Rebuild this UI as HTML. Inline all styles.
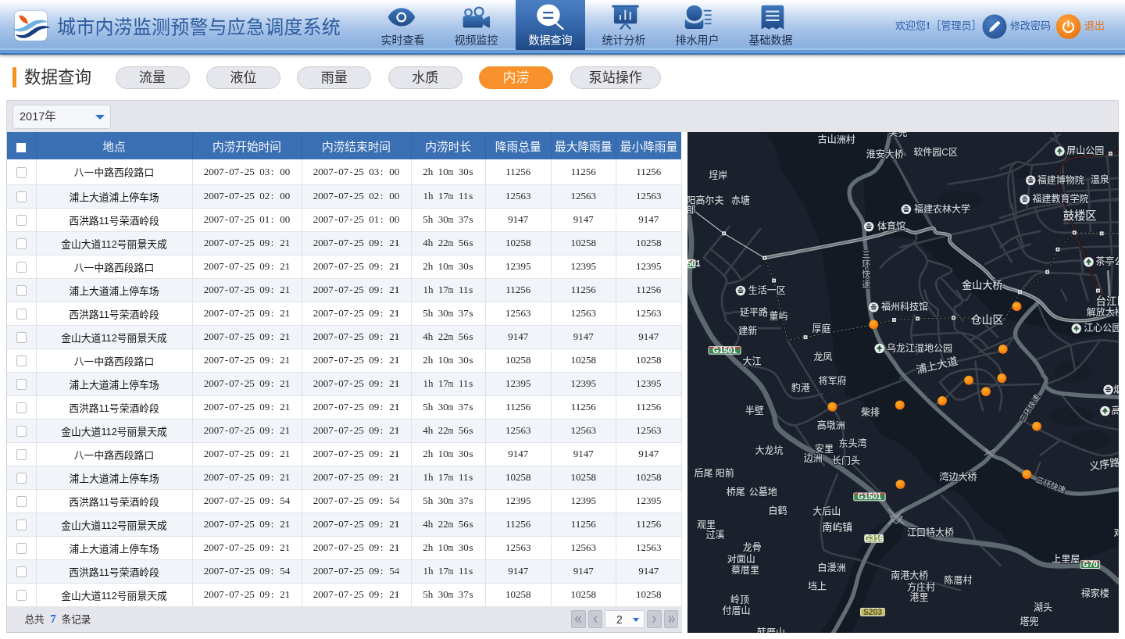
<!DOCTYPE html>
<html lang="zh-CN">
<head>
<meta charset="utf-8">
<title>城市内涝监测预警与应急调度系统</title>
<style>
*{box-sizing:border-box;margin:0;padding:0}
html,body{width:1125px;height:639px;overflow:hidden;background:#fff}
body{font-family:"Liberation Sans","Noto Sans CJK SC",sans-serif;color:#333}
#app{position:absolute;left:0;top:0;width:1440px;height:818px;transform:scale(0.78125);transform-origin:0 0;background:#fff;overflow:hidden;will-change:transform}
/* header */
#hd{position:absolute;left:0;top:0;width:1440px;height:69.6px;background:linear-gradient(#fff 0,#f3f7fc 5px,#d6e3f5 15px,#bdd2ee 26px,#a6c2e8 38px,#93b5e2 52px,#8ab0df 61.2px,#a0c2eb 62.4px,#a0c2eb 63.6px,#6692c8 64px,#6692c8 65px,#6aa7e6 65.6px,#5d9de1 67.4px,#4878b0 68px,#4675ab 69.6px);box-shadow:0 1px 4px rgba(40,45,70,.55)}
#hsv{position:absolute;left:0;top:0}
#logo{position:absolute;left:19px;top:13.5px;width:41px;height:38px;background:#fff;border-radius:6px;box-shadow:0 0 2px rgba(80,110,160,.6)}
#title{position:absolute;left:73px;top:15px;font-size:24px;line-height:40px;color:#2d5c9e;letter-spacing:0.2px;white-space:nowrap}
.nav{position:absolute;top:0;height:64px;width:89px;text-align:center;font-size:14px;color:#1d2f4a;white-space:nowrap}
.nav span{position:absolute;left:0;right:0;top:41px;line-height:20px}
.nav svg{position:absolute;left:50%;top:6px;margin-left:-20px;width:40px;height:34px}
.nav.on{background:linear-gradient(#4a80c3,#3567ab 50%,#1f4985);color:#fff}
.ut{position:absolute;top:24px;font-size:13px;line-height:18px;color:#2e62b0;white-space:nowrap;font-family:"Liberation Sans","Noto Sans CJK SC",sans-serif}
.rb{position:absolute;top:17px;width:30px;height:30px;border-radius:50%}
/* section */
#bar{position:absolute;left:16px;top:86px;width:5px;height:26px;background:#f5921e;border-radius:1px}
#sec{position:absolute;left:31px;top:81.5px;font-size:21.5px;line-height:34px;color:#333;white-space:nowrap}
.pill{position:absolute;top:84.5px;width:95px;height:29px;border-radius:15px;background:#e6e7ec;border:1px solid #c9cad1;font-size:17px;line-height:27px;text-align:center;color:#333}
.pill.on{background:#f8912b;border-color:#f08a1e;color:#fff1dd}
#tb{position:absolute;left:8px;top:128px;width:1424px;height:41px;background:#e5e6ec;border:1px solid #d3d5da;border-bottom:0}
#lb{position:absolute;left:8px;top:169px;width:1px;height:641px;background:#cfd0d4}
#sel{position:absolute;left:15.5px;top:133.5px;width:126px;height:31px;background:#f5f6f9;border:1px solid #cfd1d7;border-radius:4px;font-size:14.5px;line-height:29px;padding-left:8.5px;color:#333}
#sel i{position:absolute;right:6.5px;top:12px;border:6px solid transparent;border-top:6px solid #2f6fc6;border-bottom:0}
/* table */
#tw{position:absolute;left:9px;top:169px;width:871px;height:641px;background:#fff}
table{border-collapse:collapse;table-layout:fixed;width:863px;font-family:"Liberation Serif","Noto Serif CJK SC",serif;font-size:13px;color:#222}
td i{display:inline-block;width:6.5px;text-align:center;font-style:normal;white-space:pre}
td i.m{width:10.2px;margin:0 -1.85px;transform:scaleX(.66)}
th{height:35px;background:#3a6fb3;color:#f4f8ff;font-weight:normal;font-family:"Liberation Sans","Noto Sans CJK SC",sans-serif;font-size:14.7px;letter-spacing:0;border-right:1px solid #3463a4;text-align:center;padding-bottom:1px}
th:last-child{border-right:0}
tr.first td{height:32px}
td{height:30px;text-align:center;border-right:1px solid #dfe2e8;border-bottom:1px solid #dfe2e8;white-space:nowrap}
td.zh{font-family:"Liberation Sans","Noto Sans CJK SC",sans-serif;font-size:12.8px;color:#111}
tr.alt td{background:#f1f4f9}
.cb{display:inline-block;width:13.5px;height:13.5px;border:1px solid #bdbdbd;border-radius:2px;background:#fff;vertical-align:middle}
th .cb{border:0;border-radius:0;width:12px;height:12px;position:relative;top:1.5px}
#ft{position:absolute;left:9px;top:776px;width:863.5px;height:34px;background:#e5e6ec;border-bottom:1px solid #c6c7cb;font-family:"Liberation Sans","Noto Sans CJK SC",sans-serif;font-size:12.6px;line-height:33px;padding-left:22.5px;color:#2a2a2a;white-space:pre}
#ft b{color:#1a62e0;font-family:"Liberation Serif",serif;font-weight:bold;font-size:15px;margin:0 3.5px 0 4px}
.pg{position:absolute;top:780.5px;height:23.5px;width:18.6px;background:#c8cbd4;border:1px solid #b6b9c4;border-radius:2px}
.pg svg{position:absolute;left:0;top:0;width:100%;height:100%}
#pgs{position:absolute;left:774px;top:780.5px;width:51px;height:23.5px;background:#fbfbfd;border:1px solid #cdd0d8;border-radius:2px;font-size:14px;line-height:22px;padding-left:14px;color:#333}
#pgs i{position:absolute;right:6.5px;top:9px;border:4px solid transparent;border-top:5px solid #2f6fd0;border-bottom:0}
#map{position:absolute;left:879.6px;top:168.7px;width:552px;height:641px;overflow:hidden;background:#1b2029}
</style>
</head>
<body>
<div id="app">
<div id="hd">
  <div id="logo"></div>
  <div id="title">城市内涝监测预警与应急调度系统</div>
  <div class="nav" style="left:471px"><span>实时查看</span></div>
  <div class="nav" style="left:565px"><span>视频监控</span></div>
  <div class="nav on" style="left:660px"><span>数据查询</span></div>
  <div class="nav" style="left:754px"><span>统计分析</span></div>
  <div class="nav" style="left:848px"><span>排水用户</span></div>
  <div class="nav" style="left:942px"><span>基础数据</span></div>
  <div class="ut" style="left:1146px">欢迎您<b style="display:inline-block;width:6.5px;text-align:center">!</b>［管理员］</div>
  <div class="ut" style="left:1293px">修改密码</div>
  <div class="ut" style="left:1388px;color:#e8741a">退出</div>
<svg id="hsv" viewBox="0 0 1125 53.125" width="1440" height="68">
<defs>
<linearGradient id="ig" x1="0" y1="0" x2="0" y2="1"><stop offset="0" stop-color="#3d77bb"/><stop offset="1" stop-color="#1f4b88"/></linearGradient>
<radialGradient id="bg1" cx="0.4" cy="0.3" r="0.8"><stop offset="0" stop-color="#4a7fc6"/><stop offset="1" stop-color="#234f90"/></radialGradient>
<radialGradient id="og1" cx="0.4" cy="0.3" r="0.8"><stop offset="0" stop-color="#ffa338"/><stop offset="1" stop-color="#e8720f"/></radialGradient>
</defs>
<!-- logo -->
<path d="M19.3 15.2 C23.6 15.2 27.8 19 28 23.7 C23.6 23.3 19.4 19.6 19.3 15.2Z" fill="#e8591a"/>
<path d="M11.7 28.6 C17 29.6 21.5 28.8 26 25.6 C31 22 36 19.4 41.5 19.9 C44 20.1 46.5 21 48 21.8 C45 22.3 41 22.3 37 24.2 C32 26.8 28 30.8 22 31.5 C18 31.9 14 30.6 11.7 28.6Z" fill="#6db1e2"/>
<path d="M15.5 34.4 C20 36 25 35.4 29.5 32 C34 28.6 38 26 43 25.8 C46 25.7 48.5 26.8 50.3 28 C47 28 43 28.2 39.5 30 C35 32.5 31 37 25 38 C21 38.6 17.5 37 15.5 34.4Z" fill="#173f80"/>
<!-- eye -->
<g fill="url(#ig)">
<path d="M388 17.2 C390.3 11.6 396 8 401.5 8 C407 8 412.7 11.6 415 17.2 C412.7 22.7 407 26.2 401.5 26.2 C396 26.2 390.3 22.7 388 17.2Z"/>
<!-- camera -->
<rect x="463" y="16" width="19.8" height="11.8" rx="2"/>
<path d="M482.6 19.6 L488.6 16.3 Q489.9 15.8 489.9 17 V26.8 Q489.9 28 488.6 27.5 L482.6 24.2Z"/>
<!-- board -->
<rect x="612" y="5" width="26.9" height="2.4" rx="0.5"/>
<path d="M614 7 H637 V21.6 Q637 23.6 635 23.6 H616 Q614 23.6 614 21.6Z"/>
<path d="M624.3 23 L619.6 29 L621.4 29.4 L625.4 24.6 L629.4 29.4 L631.2 29 L626.5 23Z"/>
<!-- user -->
<circle cx="694.3" cy="13.1" r="7.9"/>
<path d="M685 19.2 Q689 23.3 694.3 23.3 Q699.6 23.3 703.4 19.2 V25.9 Q703.4 28.9 700.4 28.9 H688 Q685 28.9 685 25.9Z"/>
<rect x="703.6" y="10" width="7.8" height="1.3"/><rect x="704.6" y="14.3" width="6.8" height="1.3"/><rect x="704.6" y="18.7" width="6.8" height="1.3"/><rect x="704.6" y="23" width="6.8" height="1.3"/>
<!-- receipt -->
<path d="M761.4 7.2 Q761.4 5.2 763.4 5.2 H781.8 Q783.8 5.2 783.8 7.2 V29.2 L780.1 27.2 L776.3 29.2 L772.6 27.2 L768.9 29.2 L765.1 27.2 L761.4 29.2Z"/>
</g>
<circle cx="401.4" cy="17.2" r="4.1" fill="none" stroke="#eef3fa" stroke-width="2"/>
<circle cx="468.4" cy="12.6" r="3.3" fill="none" stroke="#3a72b5" stroke-width="1.8"/>
<circle cx="479" cy="11.7" r="4.25" fill="none" stroke="#3a72b5" stroke-width="1.8"/>
<g fill="#dbe6f5"><rect x="619.6" y="14.9" width="1.5" height="5"/><rect x="624.5" y="10" width="1.5" height="9.9"/><rect x="629.5" y="11.8" width="1.5" height="8.1"/>
<rect x="765.8" y="10.6" width="13.4" height="1.8"/><rect x="765.8" y="14.9" width="13.4" height="1.8"/><rect x="765.8" y="19.3" width="13.4" height="1.8"/></g>
<path d="M685.6 17.4 Q689 22.4 694.3 22.4 Q699.6 22.4 703 17.4" fill="none" stroke="#c3d6f0" stroke-width="1.5"/>
<!-- magnifier -->
<ellipse cx="548.4" cy="15.1" rx="11.5" ry="10.8" fill="#fff"/>
<path d="M556 23 L563 29" stroke="#fff" stroke-width="1.8" stroke-linecap="round"/>
<rect x="543" y="11.8" width="10.4" height="1.7" rx=".6" fill="#2f5f9f"/><rect x="543" y="16.9" width="10.4" height="1.8" rx=".6" fill="#2f5f9f"/>
<!-- right buttons -->
<circle cx="994.5" cy="26.6" r="12.1" fill="url(#bg1)"/>
<path d="M989.2 32 L990.2 28.4 L997.2 21.4 Q998 20.7 998.9 21.5 L999.7 22.3 Q1000.4 23.1 999.7 23.9 L992.7 30.9Z" fill="#fff"/>
<circle cx="1068.4" cy="26.6" r="12.3" fill="url(#og1)"/>
<path d="M1065.4 23 A5.1 5.1 0 1 0 1071.4 23" fill="none" stroke="#fff" stroke-width="1.7" stroke-linecap="round"/>
<path d="M1068.4 21 V26.4" stroke="#fff" stroke-width="1.7" stroke-linecap="round"/>
</svg>

</div>
<div id="bar"></div>
<div id="sec">数据查询</div>
<div class="pill" style="left:147.5px">流量</div>
<div class="pill" style="left:263.9px">液位</div>
<div class="pill" style="left:380.3px">雨量</div>
<div class="pill" style="left:496.7px">水质</div>
<div class="pill on" style="left:613.1px">内涝</div>
<div class="pill" style="left:729.5px;width:116.5px">泵站操作</div>
<div id="tb"></div>
<div id="sel">2017年<i></i></div>
<div id="tw">
<table>
<colgroup><col style="width:37px"><col style="width:200px"><col style="width:140px"><col style="width:140px"><col style="width:95.5px"><col style="width:83.5px"><col style="width:83.5px"><col style="width:83.5px"></colgroup>
<tr><th><span class="cb"></span></th><th>地点</th><th>内涝开始时间</th><th>内涝结束时间</th><th>内涝时长</th><th>降雨总量</th><th>最大降雨量</th><th>最小降雨量</th></tr>
<tr class="first"><td><span class="cb"></span></td><td class="zh">八一中路西段路口</td><td>2007<i>-</i>07<i>-</i>25<i> </i>03<i>:</i><i> </i>00</td><td>2007<i>-</i>07<i>-</i>25<i> </i>03<i>:</i><i> </i>00</td><td>2<i>h</i><i> </i>10<i class="m">m</i><i> </i>30<i>s</i></td><td>11256</td><td>11256</td><td>11256</td></tr>
<tr class="alt"><td><span class="cb"></span></td><td class="zh">浦上大道浦上停车场</td><td>2007<i>-</i>07<i>-</i>25<i> </i>02<i>:</i><i> </i>00</td><td>2007<i>-</i>07<i>-</i>25<i> </i>02<i>:</i><i> </i>00</td><td>1<i>h</i><i> </i>17<i class="m">m</i><i> </i>11<i>s</i></td><td>12563</td><td>12563</td><td>12563</td></tr>
<tr><td><span class="cb"></span></td><td class="zh">西洪路11号荣酒岭段</td><td>2007<i>-</i>07<i>-</i>25<i> </i>01<i>:</i><i> </i>00</td><td>2007<i>-</i>07<i>-</i>25<i> </i>01<i>:</i><i> </i>00</td><td>5<i>h</i><i> </i>30<i class="m">m</i><i> </i>37<i>s</i></td><td>9147</td><td>9147</td><td>9147</td></tr>
<tr class="alt"><td><span class="cb"></span></td><td class="zh">金山大道112号丽景天成</td><td>2007<i>-</i>07<i>-</i>25<i> </i>09<i>:</i><i> </i>21</td><td>2007<i>-</i>07<i>-</i>25<i> </i>09<i>:</i><i> </i>21</td><td>4<i>h</i><i> </i>22<i class="m">m</i><i> </i>56<i>s</i></td><td>10258</td><td>10258</td><td>10258</td></tr>
<tr><td><span class="cb"></span></td><td class="zh">八一中路西段路口</td><td>2007<i>-</i>07<i>-</i>25<i> </i>09<i>:</i><i> </i>21</td><td>2007<i>-</i>07<i>-</i>25<i> </i>09<i>:</i><i> </i>21</td><td>2<i>h</i><i> </i>10<i class="m">m</i><i> </i>30<i>s</i></td><td>12395</td><td>12395</td><td>12395</td></tr>
<tr class="alt"><td><span class="cb"></span></td><td class="zh">浦上大道浦上停车场</td><td>2007<i>-</i>07<i>-</i>25<i> </i>09<i>:</i><i> </i>21</td><td>2007<i>-</i>07<i>-</i>25<i> </i>09<i>:</i><i> </i>21</td><td>1<i>h</i><i> </i>17<i class="m">m</i><i> </i>11<i>s</i></td><td>11256</td><td>11256</td><td>11256</td></tr>
<tr><td><span class="cb"></span></td><td class="zh">西洪路11号荣酒岭段</td><td>2007<i>-</i>07<i>-</i>25<i> </i>09<i>:</i><i> </i>21</td><td>2007<i>-</i>07<i>-</i>25<i> </i>09<i>:</i><i> </i>21</td><td>5<i>h</i><i> </i>30<i class="m">m</i><i> </i>37<i>s</i></td><td>12563</td><td>12563</td><td>12563</td></tr>
<tr class="alt"><td><span class="cb"></span></td><td class="zh">金山大道112号丽景天成</td><td>2007<i>-</i>07<i>-</i>25<i> </i>09<i>:</i><i> </i>21</td><td>2007<i>-</i>07<i>-</i>25<i> </i>09<i>:</i><i> </i>21</td><td>4<i>h</i><i> </i>22<i class="m">m</i><i> </i>56<i>s</i></td><td>9147</td><td>9147</td><td>9147</td></tr>
<tr><td><span class="cb"></span></td><td class="zh">八一中路西段路口</td><td>2007<i>-</i>07<i>-</i>25<i> </i>09<i>:</i><i> </i>21</td><td>2007<i>-</i>07<i>-</i>25<i> </i>09<i>:</i><i> </i>21</td><td>2<i>h</i><i> </i>10<i class="m">m</i><i> </i>30<i>s</i></td><td>10258</td><td>10258</td><td>10258</td></tr>
<tr class="alt"><td><span class="cb"></span></td><td class="zh">浦上大道浦上停车场</td><td>2007<i>-</i>07<i>-</i>25<i> </i>09<i>:</i><i> </i>21</td><td>2007<i>-</i>07<i>-</i>25<i> </i>09<i>:</i><i> </i>21</td><td>1<i>h</i><i> </i>17<i class="m">m</i><i> </i>11<i>s</i></td><td>12395</td><td>12395</td><td>12395</td></tr>
<tr><td><span class="cb"></span></td><td class="zh">西洪路11号荣酒岭段</td><td>2007<i>-</i>07<i>-</i>25<i> </i>09<i>:</i><i> </i>21</td><td>2007<i>-</i>07<i>-</i>25<i> </i>09<i>:</i><i> </i>21</td><td>5<i>h</i><i> </i>30<i class="m">m</i><i> </i>37<i>s</i></td><td>11256</td><td>11256</td><td>11256</td></tr>
<tr class="alt"><td><span class="cb"></span></td><td class="zh">金山大道112号丽景天成</td><td>2007<i>-</i>07<i>-</i>25<i> </i>09<i>:</i><i> </i>21</td><td>2007<i>-</i>07<i>-</i>25<i> </i>09<i>:</i><i> </i>21</td><td>4<i>h</i><i> </i>22<i class="m">m</i><i> </i>56<i>s</i></td><td>12563</td><td>12563</td><td>12563</td></tr>
<tr><td><span class="cb"></span></td><td class="zh">八一中路西段路口</td><td>2007<i>-</i>07<i>-</i>25<i> </i>09<i>:</i><i> </i>21</td><td>2007<i>-</i>07<i>-</i>25<i> </i>09<i>:</i><i> </i>21</td><td>2<i>h</i><i> </i>10<i class="m">m</i><i> </i>30<i>s</i></td><td>9147</td><td>9147</td><td>9147</td></tr>
<tr class="alt"><td><span class="cb"></span></td><td class="zh">浦上大道浦上停车场</td><td>2007<i>-</i>07<i>-</i>25<i> </i>09<i>:</i><i> </i>21</td><td>2007<i>-</i>07<i>-</i>25<i> </i>09<i>:</i><i> </i>21</td><td>1<i>h</i><i> </i>17<i class="m">m</i><i> </i>11<i>s</i></td><td>10258</td><td>10258</td><td>10258</td></tr>
<tr><td><span class="cb"></span></td><td class="zh">西洪路11号荣酒岭段</td><td>2007<i>-</i>07<i>-</i>25<i> </i>09<i>:</i><i> </i>54</td><td>2007<i>-</i>07<i>-</i>25<i> </i>09<i>:</i><i> </i>54</td><td>5<i>h</i><i> </i>30<i class="m">m</i><i> </i>37<i>s</i></td><td>12395</td><td>12395</td><td>12395</td></tr>
<tr class="alt"><td><span class="cb"></span></td><td class="zh">金山大道112号丽景天成</td><td>2007<i>-</i>07<i>-</i>25<i> </i>09<i>:</i><i> </i>21</td><td>2007<i>-</i>07<i>-</i>25<i> </i>09<i>:</i><i> </i>21</td><td>4<i>h</i><i> </i>22<i class="m">m</i><i> </i>56<i>s</i></td><td>11256</td><td>11256</td><td>11256</td></tr>
<tr><td><span class="cb"></span></td><td class="zh">浦上大道浦上停车场</td><td>2007<i>-</i>07<i>-</i>25<i> </i>09<i>:</i><i> </i>21</td><td>2007<i>-</i>07<i>-</i>25<i> </i>09<i>:</i><i> </i>21</td><td>2<i>h</i><i> </i>10<i class="m">m</i><i> </i>30<i>s</i></td><td>12563</td><td>12563</td><td>12563</td></tr>
<tr class="alt"><td><span class="cb"></span></td><td class="zh">西洪路11号荣酒岭段</td><td>2007<i>-</i>07<i>-</i>25<i> </i>09<i>:</i><i> </i>54</td><td>2007<i>-</i>07<i>-</i>25<i> </i>09<i>:</i><i> </i>54</td><td>1<i>h</i><i> </i>17<i class="m">m</i><i> </i>11<i>s</i></td><td>9147</td><td>9147</td><td>9147</td></tr>
<tr><td><span class="cb"></span></td><td class="zh">金山大道112号丽景天成</td><td>2007<i>-</i>07<i>-</i>25<i> </i>09<i>:</i><i> </i>21</td><td>2007<i>-</i>07<i>-</i>25<i> </i>09<i>:</i><i> </i>21</td><td>5<i>h</i><i> </i>30<i class="m">m</i><i> </i>37<i>s</i></td><td>10258</td><td>10258</td><td>10258</td></tr>
</table>
</div>
<div id="lb"></div>
<div id="ft">总共 <b>7</b> 条记录</div>
<div class="pg" style="left:731px"><svg viewBox="0 0 18.6 23.5"><path d="M8.6 7.5 L5 11.7 L8.6 16 M13 7.5 L9.4 11.7 L13 16" fill="none" stroke="#7d8292" stroke-width="1.2"/></svg></div>
<div class="pg" style="left:752.7px"><svg viewBox="0 0 18.6 23.5"><path d="M11 7.5 L7.4 11.7 L11 16" fill="none" stroke="#7d8292" stroke-width="1.2"/></svg></div>
<div id="pgs">2<i></i></div>
<div class="pg" style="left:828.4px"><svg viewBox="0 0 18.6 23.5"><path d="M7.6 7.5 L11.2 11.7 L7.6 16" fill="none" stroke="#7d8292" stroke-width="1.2"/></svg></div>
<div class="pg" style="left:849.8px"><svg viewBox="0 0 18.6 23.5"><path d="M5.6 7.5 L9.2 11.7 L5.6 16 M10 7.5 L13.6 11.7 L10 16" fill="none" stroke="#7d8292" stroke-width="1.2"/></svg></div>
<div id="map">
<svg width="552" height="641" viewBox="687.2 131.8 431.3 500.8" preserveAspectRatio="none" style="display:block;font-family:'Liberation Sans','Noto Sans CJK SC',sans-serif">
<defs>
<radialGradient id="od" cx="0.42" cy="0.35" r="0.75"><stop offset="0" stop-color="#ffb02e"/><stop offset="0.55" stop-color="#fb8a10"/><stop offset="1" stop-color="#dc5c06"/></radialGradient>
</defs>
<rect x="687.2" y="131.8" width="431.3" height="500.8" fill="#1b212c"/>
<polygon points="765.0,131.0 890.0,131.0 887.0,146.0 882.8,158.5 872.0,172.5 858.0,179.0 851.0,185.0 849.0,192.0 851.0,202.0 858.0,213.0 863.0,223.0 864.5,240.0 866.0,255.0 868.0,295.0 871.0,316.0 879.0,340.0 895.0,364.0 905.0,377.0 940.0,412.0 988.0,452.0 1004.0,460.0 1027.0,474.0 1070.0,493.0 1120.0,489.0 1120.0,545.0 1080.0,560.0 1045.0,562.0 1010.0,546.0 1000.0,531.4 986.4,522.6 973.3,509.5 960.1,494.2 942.6,487.6 925.1,472.3 916.3,456.9 896.6,441.6 881.3,435.0 870.4,417.5 863.8,402.0 846.0,395.0 834.0,361.0 828.7,295.0 825.1,279.0 822.4,255.0 817.1,236.4 806.5,209.8 793.2,188.5 782.6,172.6 774.6,146.0" fill="#131a24"/>
<polygon points="862.0,150.0 890.0,140.0 903.0,175.0 912.0,190.0 925.0,211.0 932.0,228.0 936.0,232.0 949.0,235.0 952.0,244.0 982.0,268.0 993.0,279.0 1005.0,287.0 1020.0,292.0 1038.0,300.0 1054.0,314.0 1073.0,318.0 1094.0,316.0 1120.0,308.0 1120.0,332.0 1075.0,338.0 1040.0,326.0 1000.0,318.0 992.6,312.6 977.6,297.6 955.1,275.1 930.7,254.4 915.7,239.4 890.0,236.0 866.0,240.0" fill="#131a24"/>
<polygon points="893.0,516.0 905.0,523.0 900.0,540.0 880.0,560.0 868.0,590.0 858.0,620.0 850.0,633.0 820.0,633.0 836.0,610.0 848.0,580.0 858.0,550.0 872.0,530.0" fill="#131a24"/>
<ellipse cx="1072.6" cy="371.7" rx="19" ry="11" fill="#171d27"/>
<ellipse cx="1071.2" cy="415.5" rx="22" ry="10" fill="#171d27"/>
<ellipse cx="1021.5" cy="169" rx="12" ry="9" fill="#171d27"/>
<ellipse cx="959" cy="200" rx="22" ry="9" fill="#171d27"/>
<ellipse cx="1090" cy="440" rx="20" ry="10" fill="#171d27"/>
<path d="M787.0 340.0 C793.5 350.6 814.9 386.9 823.0 399.0 C831.1 411.1 828.6 401.8 832.0 407.0 C835.4 412.2 839.7 417.6 842.0 428.0 C844.3 438.4 844.5 458.3 845.0 465.0" fill="none" stroke="#38414a" stroke-width="2.0" stroke-linejoin="round" stroke-linecap="round" />
<polyline points="832.0,407.0 905.0,379.0" fill="none" stroke="#38414a" stroke-width="2.0" stroke-linejoin="round" stroke-linecap="round" />
<path d="M832.0 407.0 C825.3 410.2 805.6 424.1 795.0 425.0 C784.4 425.9 777.0 414.3 773.0 412.0" fill="none" stroke="#38414a" stroke-width="2.0" stroke-linejoin="round" stroke-linecap="round" />
<path d="M795.0 425.0 C797.7 429.0 804.8 439.8 810.0 447.0 C815.2 454.2 821.5 461.8 824.0 465.0" fill="none" stroke="#38414a" stroke-width="2.0" stroke-linejoin="round" stroke-linecap="round" />
<path d="M746.0 365.0 C750.9 366.3 764.9 366.2 773.0 372.0 C781.1 377.8 782.2 393.0 791.0 397.0 C799.8 401.0 816.4 394.5 822.0 394.0" fill="none" stroke="#38414a" stroke-width="2.0" stroke-linejoin="round" stroke-linecap="round" />
<path d="M900.0 247.0 C909.5 244.7 937.2 237.8 953.0 234.0 C968.8 230.2 973.6 230.0 988.0 226.0 C1002.4 222.0 1015.4 216.3 1033.0 212.0 C1050.6 207.7 1070.3 204.5 1086.0 202.0 C1101.7 199.5 1113.9 198.7 1120.0 198.0" fill="none" stroke="#38414a" stroke-width="2.0" stroke-linejoin="round" stroke-linecap="round" />
<path d="M948.0 184.0 C959.5 181.7 993.8 178.6 1012.0 171.0 C1030.2 163.4 1040.4 148.7 1049.0 142.0 C1057.6 135.3 1058.0 135.4 1060.0 134.0" fill="none" stroke="#38414a" stroke-width="2.0" stroke-linejoin="round" stroke-linecap="round" />
<polyline points="1012.0,171.0 1016.0,215.0" fill="none" stroke="#38414a" stroke-width="2.0" stroke-linejoin="round" stroke-linecap="round" />
<path d="M900.0 170.0 C902.9 175.2 910.8 189.5 916.0 199.0 C921.2 208.5 926.7 218.7 929.0 223.0" fill="none" stroke="#38414a" stroke-width="2.0" stroke-linejoin="round" stroke-linecap="round" />
<path d="M892.0 158.5 C894.0 161.5 900.0 170.3 903.2 175.4 C906.4 180.5 908.8 184.6 910.0 186.6" fill="none" stroke="#38414a" stroke-width="2.0" stroke-linejoin="round" stroke-linecap="round" />
<path d="M1033.0 361.0 C1039.7 358.1 1057.9 348.8 1070.0 345.0 C1082.1 341.2 1091.0 340.5 1100.0 340.0 C1109.0 339.5 1116.4 341.6 1120.0 342.0" fill="none" stroke="#38414a" stroke-width="2.0" stroke-linejoin="round" stroke-linecap="round" />
<path d="M1044.0 385.0 C1049.6 382.3 1064.9 378.1 1075.0 370.0 C1085.1 361.9 1095.5 345.4 1100.0 340.0" fill="none" stroke="#38414a" stroke-width="2.0" stroke-linejoin="round" stroke-linecap="round" />
<path d="M1060.0 393.0 C1064.5 397.9 1074.2 413.3 1085.0 420.0 C1095.8 426.7 1113.7 428.2 1120.0 430.0" fill="none" stroke="#38414a" stroke-width="2.0" stroke-linejoin="round" stroke-linecap="round" />
<path d="M1022.0 420.0 C1028.8 423.6 1046.0 433.7 1060.0 440.0 C1074.0 446.3 1089.2 452.8 1100.0 455.0 C1110.8 457.2 1116.4 452.5 1120.0 452.0" fill="none" stroke="#38414a" stroke-width="2.0" stroke-linejoin="round" stroke-linecap="round" />
<polyline points="1070.0,345.0 1075.0,370.0" fill="none" stroke="#38414a" stroke-width="2.0" stroke-linejoin="round" stroke-linecap="round" />
<polyline points="1040.0,455.0 1060.0,440.0" fill="none" stroke="#38414a" stroke-width="2.0" stroke-linejoin="round" stroke-linecap="round" />
<path d="M1036.0 300.0 C1038.5 305.4 1043.9 321.9 1050.0 330.0 C1056.1 338.1 1066.4 342.3 1070.0 345.0" fill="none" stroke="#38414a" stroke-width="2.0" stroke-linejoin="round" stroke-linecap="round" />
<path d="M837.0 474.0 C834.3 481.4 824.7 502.8 822.0 515.0 C819.3 527.2 820.9 535.3 822.0 542.0 C823.1 548.7 820.6 548.6 828.0 552.0 C835.4 555.4 849.1 556.9 863.0 561.0 C876.9 565.1 897.4 572.5 905.0 575.0" fill="none" stroke="#38414a" stroke-width="2.0" stroke-linejoin="round" stroke-linecap="round" />
<polyline points="905.0,575.0 960.0,590.0" fill="none" stroke="#38414a" stroke-width="2.0" stroke-linejoin="round" stroke-linecap="round" />
<path d="M941.0 495.0 C945.3 499.5 958.9 511.9 965.0 520.0 C971.1 528.1 973.2 536.4 975.0 540.0" fill="none" stroke="#38414a" stroke-width="2.0" stroke-linejoin="round" stroke-linecap="round" />
<polyline points="975.0,540.0 1000.0,565.0" fill="none" stroke="#38414a" stroke-width="2.0" stroke-linejoin="round" stroke-linecap="round" />
<polyline points="850.0,462.0 880.0,492.0" fill="none" stroke="#38414a" stroke-width="2.0" stroke-linejoin="round" stroke-linecap="round" />
<polyline points="1040.0,462.0 1035.0,475.0" fill="none" stroke="#38414a" stroke-width="2.0" stroke-linejoin="round" stroke-linecap="round" />
<path d="M911.3 335.1 C916.0 334.8 928.1 333.9 937.5 333.6 C947.0 333.2 956.4 332.2 963.8 333.2 C971.3 334.1 974.5 336.1 978.8 338.8 C983.2 341.5 986.5 346.5 988.2 348.2" fill="none" stroke="#38414a" stroke-width="2.0" stroke-linejoin="round" stroke-linecap="round" />
<path d="M914.1 314.4 C913.6 316.8 911.8 323.2 911.3 327.5 C910.8 331.9 910.2 334.1 911.3 338.8 C912.3 343.5 915.9 351.1 916.9 353.8" fill="none" stroke="#38414a" stroke-width="2.0" stroke-linejoin="round" stroke-linecap="round" />
<path d="M937.5 308.8 C937.7 313.2 938.0 325.7 938.5 333.2 C939.0 340.6 939.5 345.0 940.4 350.1 C941.2 355.1 942.7 359.3 943.2 361.3" fill="none" stroke="#38414a" stroke-width="2.0" stroke-linejoin="round" stroke-linecap="round" />
<path d="M954.4 306.9 C954.4 310.6 953.1 322.8 954.4 327.5 C955.8 332.3 960.6 332.2 961.9 333.2" fill="none" stroke="#38414a" stroke-width="2.0" stroke-linejoin="round" stroke-linecap="round" />
<path d="M961.9 333.2 C965.7 336.6 976.2 346.2 982.6 351.9 C989.0 357.7 994.1 360.4 997.6 365.1 C1001.2 369.8 1001.5 374.7 1002.3 378.2 C1003.2 381.8 1002.3 383.6 1002.3 384.8" fill="none" stroke="#38414a" stroke-width="2.0" stroke-linejoin="round" stroke-linecap="round" />
<path d="M969.5 340.7 C973.9 338.0 987.4 329.7 993.9 325.7 C1000.3 321.6 1003.1 319.5 1005.1 318.2" fill="none" stroke="#38414a" stroke-width="2.0" stroke-linejoin="round" stroke-linecap="round" />
<path d="M978.8 351.9 C984.9 349.2 1005.9 340.3 1012.6 336.9 C1019.4 333.6 1015.7 333.9 1016.4 333.2" fill="none" stroke="#38414a" stroke-width="2.0" stroke-linejoin="round" stroke-linecap="round" />
<path d="M900.0 378.2 C903.0 376.5 906.1 372.1 916.9 368.8 C927.7 365.6 948.2 362.9 960.1 360.4 C971.9 357.9 975.2 356.6 982.6 354.8 C990.0 352.9 996.0 353.1 1001.4 350.1 C1006.8 347.0 1010.6 340.1 1012.6 337.9" fill="none" stroke="#38414a" stroke-width="2.0" stroke-linejoin="round" stroke-linecap="round" />
<path d="M939.4 382.0 C941.8 380.3 946.1 375.0 952.6 372.6 C959.0 370.2 968.7 368.8 975.1 368.8 C981.5 368.8 984.2 369.9 988.2 372.6 C992.3 375.3 995.3 379.8 997.6 383.9 C1000.0 387.9 1001.0 390.4 1001.4 395.1 C1001.7 399.9 999.8 407.4 999.5 410.1" fill="none" stroke="#38414a" stroke-width="2.0" stroke-linejoin="round" stroke-linecap="round" />
<path d="M939.4 382.0 C942.5 385.0 950.6 396.5 956.3 398.9 C962.1 401.2 966.6 396.8 971.3 395.1 C976.1 393.4 977.9 391.5 982.6 389.5 C987.3 387.5 994.9 384.9 997.6 383.9" fill="none" stroke="#38414a" stroke-width="2.0" stroke-linejoin="round" stroke-linecap="round" />
<path d="M933.8 404.5 C935.5 403.7 937.8 404.2 943.2 399.8 C948.6 395.4 959.1 383.1 963.8 380.1 C968.6 377.1 968.4 382.4 969.5 382.9" fill="none" stroke="#38414a" stroke-width="2.0" stroke-linejoin="round" stroke-linecap="round" />
<path d="M975.1 361.3 C975.4 364.4 976.3 372.1 977.0 378.2 C977.6 384.3 977.8 389.4 978.8 395.1 C979.9 400.9 981.9 407.4 982.6 410.1" fill="none" stroke="#38414a" stroke-width="2.0" stroke-linejoin="round" stroke-linecap="round" />
<path d="M969.5 382.9 C975.4 383.3 989.8 384.6 1002.3 384.8 C1014.8 385.0 1032.3 384.0 1038.9 383.9" fill="none" stroke="#38414a" stroke-width="2.0" stroke-linejoin="round" stroke-linecap="round" />
<path d="M924.4 290.0 C925.1 292.0 925.8 297.9 928.2 301.3 C930.5 304.6 935.9 307.4 937.5 308.8" fill="none" stroke="#38414a" stroke-width="2.0" stroke-linejoin="round" stroke-linecap="round" />
<path d="M956.3 290.0 C957.3 292.0 962.3 298.2 961.9 301.3 C961.6 304.3 955.8 305.9 954.4 306.9" fill="none" stroke="#38414a" stroke-width="2.0" stroke-linejoin="round" stroke-linecap="round" />
<polyline points="978.8,318.2 997.6,336.9" fill="none" stroke="#38414a" stroke-width="2.0" stroke-linejoin="round" stroke-linecap="round" />
<path d="M1000.0 217.8 C1006.2 215.9 1023.1 209.8 1034.6 207.2 C1046.1 204.5 1048.9 204.5 1063.9 203.2 C1078.9 201.8 1108.2 200.3 1117.9 199.7" fill="none" stroke="#38414a" stroke-width="2.0" stroke-linejoin="round" stroke-linecap="round" />
<path d="M1034.6 207.2 C1035.6 209.6 1036.6 216.2 1039.9 220.5 C1043.3 224.8 1047.0 229.0 1053.2 231.1 C1059.4 233.3 1070.7 232.2 1074.5 232.4" fill="none" stroke="#38414a" stroke-width="2.0" stroke-linejoin="round" stroke-linecap="round" />
<path d="M1000.0 247.1 C1002.9 245.2 1008.8 239.3 1016.0 236.4 C1023.2 233.6 1035.6 232.1 1039.9 231.1" fill="none" stroke="#38414a" stroke-width="2.0" stroke-linejoin="round" stroke-linecap="round" />
<polyline points="1063.9,223.1 1117.9,221.8" fill="none" stroke="#38414a" stroke-width="2.0" stroke-linejoin="round" stroke-linecap="round" />
<path d="M1074.5 233.0 C1079.3 233.0 1093.3 233.2 1101.1 233.2 C1108.9 233.3 1114.9 233.2 1117.9 233.2" fill="none" stroke="#38414a" stroke-width="2.0" stroke-linejoin="round" stroke-linecap="round" />
<path d="M1057.2 249.7 C1061.3 249.3 1068.9 247.8 1079.8 247.1 C1090.8 246.4 1111.0 246.0 1117.9 245.8" fill="none" stroke="#38414a" stroke-width="2.0" stroke-linejoin="round" stroke-linecap="round" />
<path d="M1045.2 263.0 C1050.5 262.6 1066.8 260.6 1074.5 260.4 C1082.2 260.1 1085.4 261.5 1087.8 261.7" fill="none" stroke="#38414a" stroke-width="2.0" stroke-linejoin="round" stroke-linecap="round" />
<path d="M1000.0 279.0 C1005.7 277.6 1023.3 272.2 1031.9 271.0 C1040.6 269.8 1039.3 271.9 1047.9 272.4 C1056.5 272.8 1071.2 273.2 1079.8 273.7 C1088.5 274.2 1092.9 274.8 1095.8 275.0" fill="none" stroke="#38414a" stroke-width="2.0" stroke-linejoin="round" stroke-linecap="round" />
<path d="M1106.4 153.9 C1106.9 159.2 1108.4 168.9 1109.1 183.2 C1109.8 197.6 1110.0 218.5 1110.4 233.8 C1110.9 249.1 1112.0 256.4 1111.8 268.4 C1111.5 280.3 1109.6 294.6 1109.1 300.3" fill="none" stroke="#38414a" stroke-width="2.0" stroke-linejoin="round" stroke-linecap="round" />
<path d="M1087.8 177.9 C1088.1 183.6 1088.7 199.8 1089.1 209.8 C1089.6 219.9 1090.2 229.5 1090.5 233.8" fill="none" stroke="#38414a" stroke-width="2.0" stroke-linejoin="round" stroke-linecap="round" />
<path d="M1062.5 164.6 C1062.8 171.5 1063.4 192.6 1063.9 203.2 C1064.3 213.7 1065.0 219.5 1065.2 223.1" fill="none" stroke="#38414a" stroke-width="2.0" stroke-linejoin="round" stroke-linecap="round" />
<path d="M1020.0 291.5 C1022.6 288.6 1029.6 278.5 1034.6 275.0 C1039.6 271.6 1045.5 272.8 1047.9 272.4" fill="none" stroke="#38414a" stroke-width="2.0" stroke-linejoin="round" stroke-linecap="round" />
<path d="M1050.6 138.0 C1052.5 139.4 1058.8 142.1 1061.2 146.0 C1063.6 149.8 1069.1 155.9 1063.9 159.3 C1058.6 162.6 1040.6 164.1 1031.9 164.6 C1023.3 165.1 1020.3 159.5 1016.0 161.9 C1011.7 164.3 1008.9 169.8 1008.0 177.9 C1007.0 186.0 1010.2 201.9 1010.6 207.2" fill="none" stroke="#38414a" stroke-width="2.0" stroke-linejoin="round" stroke-linecap="round" />
<polyline points="1053.2,130.0 1057.2,140.6" fill="none" stroke="#38414a" stroke-width="2.0" stroke-linejoin="round" stroke-linecap="round" />
<polyline points="1000.0,168.6 1016.0,161.9" fill="none" stroke="#38414a" stroke-width="2.0" stroke-linejoin="round" stroke-linecap="round" />
<polyline points="1079.8,156.6 1117.9,155.3" fill="none" stroke="#38414a" stroke-width="2.0" stroke-linejoin="round" stroke-linecap="round" />
<polyline points="1063.9,180.6 1117.9,177.9" fill="none" stroke="#38414a" stroke-width="2.0" stroke-linejoin="round" stroke-linecap="round" />
<polyline points="1066.5,191.2 1117.9,189.1" fill="none" stroke="#38414a" stroke-width="2.0" stroke-linejoin="round" stroke-linecap="round" />
<path d="M1016.0 236.4 C1017.9 239.8 1021.3 250.3 1026.6 255.1 C1031.9 259.9 1041.9 261.6 1045.2 263.0" fill="none" stroke="#38414a" stroke-width="2.0" stroke-linejoin="round" stroke-linecap="round" />
<polyline points="1079.8,247.1 1082.5,273.7" fill="none" stroke="#38414a" stroke-width="2.0" stroke-linejoin="round" stroke-linecap="round" />
<path d="M1026.6 207.2 C1027.1 202.9 1028.3 190.9 1029.3 183.2 C1030.2 175.6 1031.5 167.9 1031.9 164.6" fill="none" stroke="#38414a" stroke-width="2.0" stroke-linejoin="round" stroke-linecap="round" />
<polyline points="1095.8,275.0 1103.8,300.3" fill="none" stroke="#38414a" stroke-width="2.0" stroke-linejoin="round" stroke-linecap="round" />
<polyline points="1079.8,273.7 1087.8,300.3" fill="none" stroke="#38414a" stroke-width="2.0" stroke-linejoin="round" stroke-linecap="round" />
<polyline points="1061.2,289.7 1066.5,300.3" fill="none" stroke="#38414a" stroke-width="2.0" stroke-linejoin="round" stroke-linecap="round" />
<polyline points="925.1,211.3 932.6,228.2" fill="none" stroke="#38414a" stroke-width="2.0" stroke-linejoin="round" stroke-linecap="round" />
<path d="M953.2 233.8 C960.3 232.1 978.8 228.1 992.6 224.4 C1006.5 220.7 1023.3 215.2 1030.0 213.1" fill="none" stroke="#38414a" stroke-width="2.0" stroke-linejoin="round" stroke-linecap="round" />
<path d="M990.8 226.3 C992.4 229.3 996.4 236.8 1000.1 243.2 C1003.9 249.6 1009.4 258.6 1011.4 261.9" fill="none" stroke="#38414a" stroke-width="2.0" stroke-linejoin="round" stroke-linecap="round" />
<path d="M985.1 263.8 C989.9 261.5 1003.3 254.2 1011.4 250.7 C1019.5 247.1 1026.6 245.3 1030.0 244.1" fill="none" stroke="#38414a" stroke-width="2.0" stroke-linejoin="round" stroke-linecap="round" />
<path d="M1011.4 203.8 C1012.1 206.8 1013.1 213.2 1015.2 220.6 C1017.2 228.1 1021.3 240.7 1022.7 245.1" fill="none" stroke="#38414a" stroke-width="2.0" stroke-linejoin="round" stroke-linecap="round" />
<path d="M880.0 267.6 C881.7 265.9 883.3 262.8 889.4 258.2 C895.5 253.6 909.1 246.6 913.8 242.2 C918.5 237.8 915.3 235.3 915.7 233.8" fill="none" stroke="#38414a" stroke-width="2.0" stroke-linejoin="round" stroke-linecap="round" />
<path d="M913.8 243.2 C916.2 246.2 925.9 253.7 926.9 260.1 C927.9 266.5 920.3 272.1 919.4 278.8 C918.6 285.6 918.9 290.2 922.2 297.6 C925.6 305.0 935.3 316.1 938.2 320.1" fill="none" stroke="#38414a" stroke-width="2.0" stroke-linejoin="round" stroke-linecap="round" />
<path d="M926.9 260.1 C931.3 261.8 949.6 265.7 951.3 269.5 C953.0 273.2 938.0 275.7 936.3 280.7 C934.6 285.8 937.2 290.5 941.9 297.6 C946.7 304.7 958.9 316.1 962.6 320.1" fill="none" stroke="#38414a" stroke-width="2.0" stroke-linejoin="round" stroke-linecap="round" />
<path d="M941.9 278.8 C945.7 282.6 957.5 296.8 962.6 299.5 C967.7 302.2 968.8 294.9 970.1 293.9" fill="none" stroke="#38414a" stroke-width="2.0" stroke-linejoin="round" stroke-linecap="round" />
<path d="M703.4 257.2 C706.9 253.0 718.2 239.3 722.7 233.8 C727.3 228.3 727.8 227.9 728.9 226.6" fill="none" stroke="#38414a" stroke-width="2.0" stroke-linejoin="round" stroke-linecap="round" />
<path d="M703.4 257.2 C707.1 260.5 719.7 270.7 723.8 275.5 C727.8 280.3 726.2 280.0 725.8 283.6 C725.4 287.3 722.1 290.7 721.7 295.9 C721.4 301.0 721.8 309.2 723.8 312.1 C725.8 315.1 731.3 312.1 732.9 312.1" fill="none" stroke="#38414a" stroke-width="2.0" stroke-linejoin="round" stroke-linecap="round" />
<path d="M710.5 249.0 C714.2 252.1 725.4 260.8 730.9 266.3 C736.4 271.8 739.2 277.2 741.1 279.6" fill="none" stroke="#38414a" stroke-width="2.0" stroke-linejoin="round" stroke-linecap="round" />
<polyline points="730.9,266.3 723.8,275.5" fill="none" stroke="#38414a" stroke-width="2.0" stroke-linejoin="round" stroke-linecap="round" />
<path d="M730.9 266.3 C733.8 262.5 741.9 251.7 747.2 245.0 C752.4 238.2 757.7 231.6 760.0 228.7" fill="none" stroke="#38414a" stroke-width="2.0" stroke-linejoin="round" stroke-linecap="round" />
<path d="M725.8 283.6 C728.5 282.9 734.9 282.9 741.1 279.6 C747.2 276.3 756.6 267.9 760.0 265.3" fill="none" stroke="#38414a" stroke-width="2.0" stroke-linejoin="round" stroke-linecap="round" />
<polyline points="723.8,312.1 725.8,320.3" fill="none" stroke="#38414a" stroke-width="2.0" stroke-linejoin="round" stroke-linecap="round" />
<polyline points="732.9,312.1 760.0,310.1" fill="none" stroke="#38414a" stroke-width="2.0" stroke-linejoin="round" stroke-linecap="round" />
<polyline points="738.0,328.0 780.0,328.0" fill="none" stroke="#38414a" stroke-width="2.0" stroke-linejoin="round" stroke-linecap="round" />
<path d="M725.0 320.0 C727.3 322.7 736.2 330.5 738.0 335.0 C739.8 339.5 735.5 343.2 735.0 345.0" fill="none" stroke="#38414a" stroke-width="2.0" stroke-linejoin="round" stroke-linecap="round" />
<polyline points="887.0,146.0 895.0,160.0 910.0,190.0 925.0,215.0 933.0,228.0" fill="none" stroke="#4c555d" stroke-width="2.2" stroke-linejoin="round" stroke-linecap="round" />
<polyline points="892.0,132.0 905.0,155.0" fill="none" stroke="#4c555d" stroke-width="2.2" stroke-linejoin="round" stroke-linecap="round" />
<path d="M688.5 215.0 C689.0 219.7 690.9 232.9 691.2 240.9 C691.5 248.9 690.5 253.0 690.2 259.2 C689.9 265.4 689.3 269.6 689.3 275.5 C689.3 281.4 688.9 285.9 690.2 291.8 C691.5 297.7 694.1 303.0 696.3 308.1 C698.5 313.2 699.2 314.6 702.4 320.3 C705.6 326.0 708.5 333.0 714.0 340.0 C719.5 347.0 724.7 350.9 733.0 359.0 C741.3 367.1 752.8 375.5 760.0 385.0 C767.2 394.5 769.8 404.3 773.0 412.0 C776.2 419.7 773.3 422.2 778.0 428.0 C782.7 433.8 790.0 438.2 799.0 444.0 C808.0 449.8 819.0 454.6 828.0 460.0 C837.0 465.4 840.2 467.5 849.0 474.0 C857.8 480.5 869.1 488.6 877.0 496.0 C884.9 503.4 888.0 510.1 893.0 515.0 C898.0 519.9 898.9 519.8 905.0 523.0 C911.1 526.2 920.5 530.3 927.0 533.0 C933.5 535.7 926.1 535.3 941.0 538.0 C955.9 540.7 991.8 543.3 1010.0 548.0 C1028.2 552.7 1029.8 560.9 1042.0 564.0 C1054.2 567.1 1067.6 565.0 1078.0 565.5 C1088.4 566.0 1092.4 563.9 1100.0 567.0 C1107.6 570.1 1116.4 580.1 1120.0 583.0" fill="none" stroke="#5c676e" stroke-width="5.2" stroke-linejoin="round" stroke-linecap="round" />
<path d="M890.0 132.0 C889.5 134.5 888.3 141.2 887.0 146.0 C885.7 150.8 884.4 154.7 882.8 158.5 C881.2 162.3 879.8 164.4 877.9 166.9 C876.0 169.4 875.8 170.3 872.3 172.5 C868.8 174.7 862.0 176.6 858.2 178.9 C854.4 181.2 852.8 182.8 851.1 185.2 C849.4 187.6 849.0 189.3 849.0 192.3 C849.0 195.3 849.4 198.3 851.1 202.1 C852.8 205.9 856.0 209.6 858.2 213.4 C860.4 217.2 862.0 218.4 863.1 223.2 C864.2 228.0 864.0 234.3 864.5 240.0 C865.0 245.7 865.4 245.1 866.0 255.0 C866.6 264.9 867.1 284.0 868.0 295.0 C868.9 306.0 869.0 307.9 871.0 316.0 C873.0 324.1 874.7 331.4 879.0 340.0 C883.3 348.6 890.3 357.3 895.0 364.0 C899.7 370.7 896.9 368.4 905.0 377.0 C913.1 385.6 925.1 398.5 940.0 412.0 C954.9 425.5 976.5 443.4 988.0 452.0 C999.5 460.6 997.0 456.0 1004.0 460.0 C1011.0 464.0 1015.1 468.1 1027.0 474.0 C1038.9 479.9 1053.3 490.3 1070.0 493.0 C1086.7 495.7 1111.0 489.7 1120.0 489.0" fill="none" stroke="#626d74" stroke-width="4.1" stroke-linejoin="round" stroke-linecap="round" />
<path d="M1038.9 301.3 C1037.2 303.0 1032.9 306.9 1029.5 310.6 C1026.1 314.3 1022.6 318.3 1020.1 321.9 C1017.6 325.5 1016.2 327.7 1015.4 330.4 C1014.6 333.1 1014.6 334.4 1015.4 336.9 C1016.2 339.4 1017.9 341.5 1020.1 344.4 C1022.3 347.3 1025.0 349.9 1027.7 352.9 C1030.4 355.9 1033.0 358.4 1035.2 361.3 C1037.4 364.2 1038.6 366.4 1039.9 368.8 C1041.2 371.2 1041.9 371.6 1042.7 374.5 C1043.5 377.4 1048.2 376.8 1044.5 385.0 C1040.8 393.2 1031.3 407.9 1022.0 420.0 C1012.7 432.1 1000.6 443.9 993.0 452.0 C985.4 460.1 989.4 458.2 980.0 465.0 C970.6 471.8 955.4 481.5 941.0 490.0 C926.6 498.5 908.6 506.8 900.0 512.0 C891.4 517.2 897.7 513.6 893.0 519.0 C888.3 524.4 879.9 532.8 874.0 542.0 C868.1 551.2 864.0 560.1 860.0 570.0 C856.0 579.9 856.0 587.3 852.0 597.0 C848.0 606.7 841.6 617.3 838.0 624.0 C834.4 630.7 833.1 632.2 832.0 634.0" fill="none" stroke="#626d74" stroke-width="4.1" stroke-linejoin="round" stroke-linecap="round" />
<path d="M1044.0 385.0 C1046.9 386.4 1046.3 390.8 1060.0 393.0 C1073.7 395.2 1109.2 396.3 1120.0 397.0" fill="none" stroke="#626d74" stroke-width="4.1" stroke-linejoin="round" stroke-linecap="round" />
<path d="M764.3 257.7 C781.6 254.4 838.5 243.7 860.6 239.1 C882.7 234.5 880.1 234.2 887.2 232.4 C894.3 230.6 896.4 229.4 900.0 229.0 C903.6 228.6 904.3 229.4 907.0 230.0 C909.7 230.6 910.5 232.8 915.0 232.4 C919.5 232.0 928.2 228.0 932.0 228.0 C935.8 228.0 932.9 231.1 936.0 232.4 C939.1 233.7 946.1 232.8 949.0 235.0 C951.9 237.2 946.0 238.4 952.0 244.4 C958.0 250.4 975.1 262.1 982.5 268.3 C989.9 274.5 989.0 275.6 993.0 279.0 C997.0 282.4 1000.1 284.7 1005.0 287.0 C1009.9 289.3 1014.1 289.3 1020.0 291.7 C1025.9 294.1 1031.9 295.9 1038.0 300.3 C1044.1 304.7 1047.7 312.4 1054.0 316.0 C1060.3 319.6 1065.8 319.8 1073.0 320.3 C1080.2 320.8 1085.5 320.7 1094.0 319.0 C1102.5 317.3 1115.3 312.4 1120.0 311.0" fill="none" stroke="#9fa5a9" stroke-width="3.5" stroke-linejoin="round" stroke-linecap="round" />
<path d="M764.3 257.7 C781.6 254.4 838.5 243.7 860.6 239.1 C882.7 234.5 880.1 234.2 887.2 232.4 C894.3 230.6 896.4 229.4 900.0 229.0 C903.6 228.6 904.3 229.4 907.0 230.0 C909.7 230.6 910.5 232.8 915.0 232.4 C919.5 232.0 928.2 228.0 932.0 228.0 C935.8 228.0 932.9 231.1 936.0 232.4 C939.1 233.7 946.1 232.8 949.0 235.0 C951.9 237.2 946.0 238.4 952.0 244.4 C958.0 250.4 975.1 262.1 982.5 268.3 C989.9 274.5 989.0 275.6 993.0 279.0 C997.0 282.4 1000.1 284.7 1005.0 287.0 C1009.9 289.3 1014.1 289.3 1020.0 291.7 C1025.9 294.1 1031.9 295.9 1038.0 300.3 C1044.1 304.7 1047.7 312.4 1054.0 316.0 C1060.3 319.6 1065.8 319.8 1073.0 320.3 C1080.2 320.8 1085.5 320.7 1094.0 319.0 C1102.5 317.3 1115.3 312.4 1120.0 311.0" fill="none" stroke="#646b71" stroke-width="1.3" stroke-linejoin="round" stroke-linecap="round" />
<polyline points="694.3,211.1 723.6,233.2 764.3,257.7" fill="none" stroke="#b9bdc1" stroke-width="0.9" stroke-linejoin="round" stroke-linecap="round" />
<path d="M1117.9 150.0 C1116.5 150.7 1117.3 152.8 1110.4 153.9 C1103.6 155.1 1088.2 155.1 1079.8 156.6 C1071.4 158.1 1067.5 159.1 1063.9 162.5 C1060.3 165.8 1059.9 168.6 1059.9 175.2 C1059.9 181.8 1061.2 188.9 1063.9 199.2 C1066.5 209.5 1070.7 221.9 1074.5 232.4 C1078.3 243.0 1081.6 248.9 1085.2 257.7 C1088.7 266.6 1091.6 275.0 1094.5 281.7 C1097.3 288.4 1099.0 291.6 1101.1 295.0 C1103.3 298.3 1105.5 299.3 1106.4 300.3" fill="none" stroke="#0d0f13" stroke-width="2.4" stroke-linejoin="round" stroke-linecap="round" />
<path d="M1117.9 150.0 C1116.5 150.7 1117.3 152.8 1110.4 153.9 C1103.6 155.1 1088.2 155.1 1079.8 156.6 C1071.4 158.1 1067.5 159.1 1063.9 162.5 C1060.3 165.8 1059.9 168.6 1059.9 175.2 C1059.9 181.8 1061.2 188.9 1063.9 199.2 C1066.5 209.5 1070.7 221.9 1074.5 232.4 C1078.3 243.0 1081.6 248.9 1085.2 257.7 C1088.7 266.6 1091.6 275.0 1094.5 281.7 C1097.3 288.4 1099.0 291.6 1101.1 295.0 C1103.3 298.3 1105.5 299.3 1106.4 300.3" fill="none" stroke="#5e2a2e" stroke-width="1.0" stroke-linejoin="round" stroke-linecap="round" />
<polyline points="764.3,257.7 773.6,280.3 778.0,300.0 787.0,340.0 805.2,337.0 873.4,324.3 893.8,319.7 917.3,318.4 953.2,317.6 1005.0,318.0 1019.7,291.7 1047.1,271.8 1057.5,249.2 1074.2,232.4 1101.4,233.2 1120.0,233.0" fill="none" stroke="#0b0d11" stroke-width="1.6" stroke-linejoin="round" stroke-linecap="round" />
<polyline points="764.3,257.7 773.6,280.3 778.0,300.0 787.0,340.0 805.2,337.0 873.4,324.3 893.8,319.7 917.3,318.4 953.2,317.6 1005.0,318.0 1019.7,291.7 1047.1,271.8 1057.5,249.2 1074.2,232.4 1101.4,233.2 1120.0,233.0" fill="none" stroke="#9aa0a6" stroke-width="0.5" stroke-linejoin="round" stroke-linecap="round" stroke-dasharray="2 2"/>
<rect x="721.7" y="231.3" width="3.8" height="3.8" fill="#e9ebee"/><rect x="722.9" y="232.5" width="1.4" height="1.4" fill="#30363d"/>
<rect x="762.4" y="255.8" width="3.8" height="3.8" fill="#e9ebee"/><rect x="763.6" y="257.0" width="1.4" height="1.4" fill="#30363d"/>
<rect x="771.7" y="278.4" width="3.8" height="3.8" fill="#e9ebee"/><rect x="772.9" y="279.6" width="1.4" height="1.4" fill="#30363d"/>
<rect x="803.3" y="335.1" width="3.8" height="3.8" fill="#e9ebee"/><rect x="804.5" y="336.3" width="1.4" height="1.4" fill="#30363d"/>
<rect x="891.9" y="317.8" width="3.8" height="3.8" fill="#e9ebee"/><rect x="893.1" y="319.0" width="1.4" height="1.4" fill="#30363d"/>
<rect x="915.4" y="316.5" width="3.8" height="3.8" fill="#e9ebee"/><rect x="916.6" y="317.7" width="1.4" height="1.4" fill="#30363d"/>
<rect x="951.3" y="315.7" width="3.8" height="3.8" fill="#e9ebee"/><rect x="952.5" y="316.9" width="1.4" height="1.4" fill="#30363d"/>
<rect x="1017.8" y="289.8" width="3.8" height="3.8" fill="#e9ebee"/><rect x="1019.0" y="291.0" width="1.4" height="1.4" fill="#30363d"/>
<rect x="1045.2" y="269.9" width="3.8" height="3.8" fill="#e9ebee"/><rect x="1046.4" y="271.1" width="1.4" height="1.4" fill="#30363d"/>
<rect x="1055.6" y="247.3" width="3.8" height="3.8" fill="#e9ebee"/><rect x="1056.8" y="248.5" width="1.4" height="1.4" fill="#30363d"/>
<rect x="1072.3" y="230.5" width="3.8" height="3.8" fill="#e9ebee"/><rect x="1073.5" y="231.7" width="1.4" height="1.4" fill="#30363d"/>
<rect x="1099.5" y="231.3" width="3.8" height="3.8" fill="#e9ebee"/><rect x="1100.7" y="232.5" width="1.4" height="1.4" fill="#30363d"/>
<rect x="1108.3" y="151.5" width="3.8" height="3.8" fill="#e9ebee"/><rect x="1109.5" y="152.7" width="1.4" height="1.4" fill="#30363d"/>
<rect x="1095.8" y="288.5" width="3.8" height="3.8" fill="#e9ebee"/><rect x="1097.0" y="289.7" width="1.4" height="1.4" fill="#30363d"/>
<polyline points="1107.8,271.0 1109.6,300.3" fill="none" stroke="#80878c" stroke-width="2.2" stroke-linejoin="round" stroke-linecap="round" />
<g fill="none" stroke="#9aa2a8" stroke-width="0.9"><path d="M888 509 L904 524 M904 509 L888 524 M890 516.5 Q896 514 902 516.5 Q899 521 896 523.5 Q893 521 890 516.5Z"/><path d="M984 455 L994 449 M985 449 L993 456"/></g>
<text x="817.5" y="142.7" font-size="9.4" fill="#c9cdd2" font-weight="500" stroke="#161b24" stroke-width="1.5" paint-order="stroke" stroke-linejoin="round">古山洲村</text>
<text x="888.5" y="136.1" font-size="9.4" fill="#c9cdd2" font-weight="500" stroke="#161b24" stroke-width="1.5" paint-order="stroke" stroke-linejoin="round">突兜</text>
<text x="865.9" y="157.3" font-size="9.4" fill="#c9cdd2" font-weight="500" stroke="#161b24" stroke-width="1.5" paint-order="stroke" stroke-linejoin="round">淮安大桥</text>
<text x="708.4" y="178.6" font-size="9.4" fill="#c9cdd2" font-weight="500" stroke="#161b24" stroke-width="1.5" paint-order="stroke" stroke-linejoin="round">埕岸</text>
<text x="686.0" y="203.9" font-size="9.4" fill="#c9cdd2" font-weight="500" stroke="#161b24" stroke-width="1.5" paint-order="stroke" stroke-linejoin="round">阳高尔夫</text>
<text x="686.0" y="212.9" font-size="9.4" fill="#c9cdd2" font-weight="500" stroke="#161b24" stroke-width="1.5" paint-order="stroke" stroke-linejoin="round">部</text>
<text x="730.8" y="203.9" font-size="9.4" fill="#c9cdd2" font-weight="500" stroke="#161b24" stroke-width="1.5" paint-order="stroke" stroke-linejoin="round">赤塘</text>
<text x="877.0" y="229.4" font-size="9.4" fill="#c9cdd2" font-weight="500" stroke="#161b24" stroke-width="1.5" paint-order="stroke" stroke-linejoin="round">体育馆</text>
<text x="748.0" y="293.8" font-size="9.4" fill="#c9cdd2" font-weight="500" stroke="#161b24" stroke-width="1.5" paint-order="stroke" stroke-linejoin="round">生活一区</text>
<text x="913.3" y="155.2" font-size="9.4" fill="#c9cdd2" font-weight="500" stroke="#161b24" stroke-width="1.5" paint-order="stroke" stroke-linejoin="round">软件园C区</text>
<text x="1066.3" y="153.4" font-size="9.4" fill="#c9cdd2" font-weight="500" stroke="#161b24" stroke-width="1.5" paint-order="stroke" stroke-linejoin="round">屏山公园</text>
<text x="1037.0" y="183.4" font-size="9.4" fill="#c9cdd2" font-weight="500" stroke="#161b24" stroke-width="1.5" paint-order="stroke" stroke-linejoin="round">福建博物院</text>
<text x="1090.2" y="182.9" font-size="9.4" fill="#c9cdd2" font-weight="500" stroke="#161b24" stroke-width="1.5" paint-order="stroke" stroke-linejoin="round">温泉</text>
<text x="1032.2" y="202.4" font-size="9.4" fill="#c9cdd2" font-weight="500" stroke="#161b24" stroke-width="1.5" paint-order="stroke" stroke-linejoin="round">福建教育学院</text>
<text x="913.8" y="212.1" font-size="9.4" fill="#c9cdd2" font-weight="500" stroke="#161b24" stroke-width="1.5" paint-order="stroke" stroke-linejoin="round">福建农林大学</text>
<text x="1095.5" y="264.9" font-size="9.4" fill="#c9cdd2" font-weight="500" stroke="#161b24" stroke-width="1.5" paint-order="stroke" stroke-linejoin="round">茶亭公园</text>
<text x="739.5" y="315.7" font-size="9.4" fill="#c9cdd2" font-weight="500" stroke="#161b24" stroke-width="1.5" paint-order="stroke" stroke-linejoin="round">延平路</text>
<text x="768.8" y="319.7" font-size="9.4" fill="#c9cdd2" font-weight="500" stroke="#161b24" stroke-width="1.5" paint-order="stroke" stroke-linejoin="round">董屿</text>
<text x="738.2" y="333.8" font-size="9.4" fill="#c9cdd2" font-weight="500" stroke="#161b24" stroke-width="1.5" paint-order="stroke" stroke-linejoin="round">建新</text>
<text x="811.9" y="332.2" font-size="9.4" fill="#c9cdd2" font-weight="500" stroke="#161b24" stroke-width="1.5" paint-order="stroke" stroke-linejoin="round">厚庭</text>
<text x="742.2" y="364.9" font-size="9.4" fill="#c9cdd2" font-weight="500" stroke="#161b24" stroke-width="1.5" paint-order="stroke" stroke-linejoin="round">大江</text>
<text x="813.2" y="359.6" font-size="9.4" fill="#c9cdd2" font-weight="500" stroke="#161b24" stroke-width="1.5" paint-order="stroke" stroke-linejoin="round">龙凤</text>
<text x="818.0" y="384.1" font-size="9.4" fill="#c9cdd2" font-weight="500" stroke="#161b24" stroke-width="1.5" paint-order="stroke" stroke-linejoin="round">将军府</text>
<text x="790.9" y="391.5" font-size="9.4" fill="#c9cdd2" font-weight="500" stroke="#161b24" stroke-width="1.5" paint-order="stroke" stroke-linejoin="round">豹港</text>
<text x="744.9" y="414.1" font-size="9.4" fill="#c9cdd2" font-weight="500" stroke="#161b24" stroke-width="1.5" paint-order="stroke" stroke-linejoin="round">半壁</text>
<text x="860.6" y="415.4" font-size="9.4" fill="#c9cdd2" font-weight="500" stroke="#161b24" stroke-width="1.5" paint-order="stroke" stroke-linejoin="round">柴排</text>
<text x="816.7" y="428.8" font-size="9.4" fill="#c9cdd2" font-weight="500" stroke="#161b24" stroke-width="1.5" paint-order="stroke" stroke-linejoin="round">高墩洲</text>
<text x="838.5" y="446.6" font-size="9.4" fill="#c9cdd2" font-weight="500" stroke="#161b24" stroke-width="1.5" paint-order="stroke" stroke-linejoin="round">东头湾</text>
<text x="754.7" y="453.5" font-size="9.4" fill="#c9cdd2" font-weight="500" stroke="#161b24" stroke-width="1.5" paint-order="stroke" stroke-linejoin="round">大龙坑</text>
<text x="814.6" y="452.2" font-size="9.4" fill="#c9cdd2" font-weight="500" stroke="#161b24" stroke-width="1.5" paint-order="stroke" stroke-linejoin="round">安里</text>
<text x="803.4" y="461.2" font-size="9.4" fill="#c9cdd2" font-weight="500" stroke="#161b24" stroke-width="1.5" paint-order="stroke" stroke-linejoin="round">边洲</text>
<text x="831.8" y="463.9" font-size="9.4" fill="#c9cdd2" font-weight="500" stroke="#161b24" stroke-width="1.5" paint-order="stroke" stroke-linejoin="round">长门头</text>
<text x="881.0" y="309.8" font-size="9.4" fill="#c9cdd2" font-weight="500" stroke="#161b24" stroke-width="1.5" paint-order="stroke" stroke-linejoin="round">福州科技馆</text>
<text x="886.4" y="351.1" font-size="9.4" fill="#c9cdd2" font-weight="500" stroke="#161b24" stroke-width="1.5" paint-order="stroke" stroke-linejoin="round">乌龙江湿地公园</text>
<text x="1086.2" y="315.7" font-size="9.4" fill="#c9cdd2" font-weight="500" stroke="#161b24" stroke-width="1.5" paint-order="stroke" stroke-linejoin="round">解放大桥</text>
<text x="1083.6" y="331.4" font-size="9.4" fill="#c9cdd2" font-weight="500" stroke="#161b24" stroke-width="1.5" paint-order="stroke" stroke-linejoin="round">江心公园</text>
<text x="693.8" y="476.6" font-size="9.4" fill="#c9cdd2" font-weight="500" stroke="#161b24" stroke-width="1.5" paint-order="stroke" stroke-linejoin="round">后尾</text>
<text x="715.1" y="476.6" font-size="9.4" fill="#c9cdd2" font-weight="500" stroke="#161b24" stroke-width="1.5" paint-order="stroke" stroke-linejoin="round">阳前</text>
<text x="726.1" y="494.9" font-size="9.4" fill="#c9cdd2" font-weight="500" stroke="#161b24" stroke-width="1.5" paint-order="stroke" stroke-linejoin="round">桥尾</text>
<text x="748.8" y="494.9" font-size="9.4" fill="#c9cdd2" font-weight="500" stroke="#161b24" stroke-width="1.5" paint-order="stroke" stroke-linejoin="round">公墓地</text>
<text x="768.0" y="513.5" font-size="9.4" fill="#c9cdd2" font-weight="500" stroke="#161b24" stroke-width="1.5" paint-order="stroke" stroke-linejoin="round">白鹤</text>
<text x="812.4" y="514.6" font-size="9.4" fill="#c9cdd2" font-weight="500" stroke="#161b24" stroke-width="1.5" paint-order="stroke" stroke-linejoin="round">大后山</text>
<text x="696.5" y="527.8" font-size="9.4" fill="#c9cdd2" font-weight="500" stroke="#161b24" stroke-width="1.5" paint-order="stroke" stroke-linejoin="round">观里</text>
<text x="705.5" y="538.2" font-size="9.4" fill="#c9cdd2" font-weight="500" stroke="#161b24" stroke-width="1.5" paint-order="stroke" stroke-linejoin="round">过溪</text>
<text x="742.5" y="550.5" font-size="9.4" fill="#c9cdd2" font-weight="500" stroke="#161b24" stroke-width="1.5" paint-order="stroke" stroke-linejoin="round">龙骨</text>
<text x="726.9" y="562.0" font-size="9.4" fill="#c9cdd2" font-weight="500" stroke="#161b24" stroke-width="1.5" paint-order="stroke" stroke-linejoin="round">对面山</text>
<text x="731.0" y="573.0" font-size="9.4" fill="#c9cdd2" font-weight="500" stroke="#161b24" stroke-width="1.5" paint-order="stroke" stroke-linejoin="round">蔡厝里</text>
<text x="817.3" y="570.8" font-size="9.4" fill="#c9cdd2" font-weight="500" stroke="#161b24" stroke-width="1.5" paint-order="stroke" stroke-linejoin="round">白漫洲</text>
<text x="807.5" y="589.4" font-size="9.4" fill="#c9cdd2" font-weight="500" stroke="#161b24" stroke-width="1.5" paint-order="stroke" stroke-linejoin="round">垱上</text>
<text x="730.2" y="602.6" font-size="9.4" fill="#c9cdd2" font-weight="500" stroke="#161b24" stroke-width="1.5" paint-order="stroke" stroke-linejoin="round">岭顶</text>
<text x="722.0" y="613.5" font-size="9.4" fill="#c9cdd2" font-weight="500" stroke="#161b24" stroke-width="1.5" paint-order="stroke" stroke-linejoin="round">付厝山</text>
<text x="756.8" y="636.0" font-size="9.4" fill="#c9cdd2" font-weight="500" stroke="#161b24" stroke-width="1.5" paint-order="stroke" stroke-linejoin="round">韩厝山</text>
<text x="939.2" y="480.4" font-size="9.4" fill="#c9cdd2" font-weight="500" stroke="#161b24" stroke-width="1.5" paint-order="stroke" stroke-linejoin="round">湾边大桥</text>
<text x="906.8" y="536.0" font-size="9.4" fill="#c9cdd2" font-weight="500" stroke="#161b24" stroke-width="1.5" paint-order="stroke" stroke-linejoin="round">江口特大桥</text>
<text x="890.5" y="578.4" font-size="9.4" fill="#c9cdd2" font-weight="500" stroke="#161b24" stroke-width="1.5" paint-order="stroke" stroke-linejoin="round">南港大桥</text>
<text x="906.8" y="590.2" font-size="9.4" fill="#c9cdd2" font-weight="500" stroke="#161b24" stroke-width="1.5" paint-order="stroke" stroke-linejoin="round">方庄村</text>
<text x="909.6" y="600.4" font-size="9.4" fill="#c9cdd2" font-weight="500" stroke="#161b24" stroke-width="1.5" paint-order="stroke" stroke-linejoin="round">港里</text>
<text x="943.8" y="583.1" font-size="9.4" fill="#c9cdd2" font-weight="500" stroke="#161b24" stroke-width="1.5" paint-order="stroke" stroke-linejoin="round">陈厝村</text>
<text x="1051.5" y="562.6" font-size="9.4" fill="#c9cdd2" font-weight="500" stroke="#161b24" stroke-width="1.5" paint-order="stroke" stroke-linejoin="round">上里屋</text>
<text x="1080.8" y="596.3" font-size="9.4" fill="#c9cdd2" font-weight="500" stroke="#161b24" stroke-width="1.5" paint-order="stroke" stroke-linejoin="round">禄家楼</text>
<text x="1033.4" y="610.5" font-size="9.4" fill="#c9cdd2" font-weight="500" stroke="#161b24" stroke-width="1.5" paint-order="stroke" stroke-linejoin="round">湖头</text>
<text x="1019.7" y="624.5" font-size="9.4" fill="#c9cdd2" font-weight="500" stroke="#161b24" stroke-width="1.5" paint-order="stroke" stroke-linejoin="round">塔兜</text>
<text x="1113.5" y="536.0" font-size="9.4" fill="#c9cdd2" font-weight="500" stroke="#161b24" stroke-width="1.5" paint-order="stroke" stroke-linejoin="round">对</text>
<text x="1113.0" y="392.8" font-size="9.4" fill="#c9cdd2" font-weight="500" stroke="#161b24" stroke-width="1.5" paint-order="stroke" stroke-linejoin="round">烟</text>
<text x="1111.0" y="414.1" font-size="9.4" fill="#c9cdd2" font-weight="500" stroke="#161b24" stroke-width="1.5" paint-order="stroke" stroke-linejoin="round">高</text>
<text x="1062.8" y="219.7" font-size="11.2" fill="#d2d5da" font-weight="500" stroke="#161b24" stroke-width="1.5" paint-order="stroke" stroke-linejoin="round">鼓楼区</text>
<text x="961.7" y="288.0" font-size="10.2" fill="#d2d5da" font-weight="500" stroke="#161b24" stroke-width="1.5" paint-order="stroke" stroke-linejoin="round">金山大桥</text>
<text x="970.5" y="322.9" font-size="10.9" fill="#d2d5da" font-weight="500" stroke="#161b24" stroke-width="1.5" paint-order="stroke" stroke-linejoin="round">仓山区</text>
<text x="1095.5" y="304.7" font-size="10.6" fill="#d2d5da" font-weight="500" stroke="#161b24" stroke-width="1.5" paint-order="stroke" stroke-linejoin="round">台江区</text>
<text x="822.0" y="530.2" font-size="10.1" fill="#d2d5da" font-weight="500" stroke="#161b24" stroke-width="1.5" paint-order="stroke" stroke-linejoin="round">南屿镇</text>
<text x="916.0" y="373.6" font-size="10.6" fill="#c9cdd2" font-weight="500" stroke="#161b24" stroke-width="1.5" paint-order="stroke" stroke-linejoin="round" transform="rotate(-13 916.0 369.8)">浦上大道</text>
<text x="1089.0" y="470.2" font-size="10.4" fill="#c9cdd2" font-weight="500" stroke="#161b24" stroke-width="1.5" paint-order="stroke" stroke-linejoin="round" transform="rotate(-9 1089.0 466.5)">义序路</text>
<text x="861.6" y="257.3" font-size="8.6" fill="#9aa1a7" font-weight="500" stroke="#161b24" stroke-width="1.5" paint-order="stroke" stroke-linejoin="round">三</text>
<text x="861.6" y="267.2" font-size="8.6" fill="#9aa1a7" font-weight="500" stroke="#161b24" stroke-width="1.5" paint-order="stroke" stroke-linejoin="round">环</text>
<text x="861.6" y="277.1" font-size="8.6" fill="#9aa1a7" font-weight="500" stroke="#161b24" stroke-width="1.5" paint-order="stroke" stroke-linejoin="round">快</text>
<text x="861.6" y="287.0" font-size="8.6" fill="#9aa1a7" font-weight="500" stroke="#161b24" stroke-width="1.5" paint-order="stroke" stroke-linejoin="round">速</text>
<text x="1029.5" y="410.8" font-size="7.8" fill="#aab0b5" font-weight="500" stroke="#161b24" stroke-width="1.5" paint-order="stroke" stroke-linejoin="round" transform="rotate(-58 1029.5 408.0)" text-anchor="middle">三环快速</text>
<text x="1050.5" y="487.4" font-size="7.8" fill="#aab0b5" font-weight="500" stroke="#161b24" stroke-width="1.5" paint-order="stroke" stroke-linejoin="round" transform="rotate(22 1050.5 484.6)" text-anchor="middle">三环快速</text>
<circle cx="868.6" cy="226.3" r="4.9" fill="#e9ecee"/>
<path d="M865.8 225.3 H871.4 V226.5 H865.8Z M866.4 227.3 H870.8 V228.7 H866.4Z M867.0 223.4 H870.2 V224.5 H867.0Z" fill="#272d35"/>
<circle cx="740.3" cy="290.4" r="4.9" fill="#e9ecee"/>
<path d="M737.5 289.4 H743.1 V290.6 H737.5Z M738.1 291.4 H742.5 V292.8 H738.1Z M738.7 287.5 H741.9 V288.6 H738.7Z" fill="#272d35"/>
<circle cx="1059.4" cy="151.0" r="4.9" fill="#e9ecee"/>
<path d="M1059.4 147.6 L1062.4 151.8 H1060.1 V154.0 H1058.7 V151.8 H1056.4Z" fill="#2c5e3a"/>
<circle cx="1030.4" cy="180.0" r="4.9" fill="#e9ecee"/>
<path d="M1027.6 179.0 H1033.2 V180.2 H1027.6Z M1028.2 181.0 H1032.6 V182.4 H1028.2Z M1028.8 177.1 H1032.0 V178.2 H1028.8Z" fill="#272d35"/>
<circle cx="1024.5" cy="199.2" r="4.9" fill="#e9ecee"/>
<path d="M1021.7 198.2 H1027.3 V199.4 H1021.7Z M1022.3 200.2 H1026.7 V201.6 H1022.3Z M1022.9 196.3 H1026.1 V197.4 H1022.9Z" fill="#272d35"/>
<circle cx="905.9" cy="209.0" r="4.9" fill="#e9ecee"/>
<path d="M903.1 208.0 H908.7 V209.2 H903.1Z M903.7 210.0 H908.1 V211.4 H903.7Z M904.3 206.1 H907.5 V207.2 H904.3Z" fill="#272d35"/>
<circle cx="1088.4" cy="261.7" r="4.9" fill="#e9ecee"/>
<path d="M1088.4 258.3 L1091.4 262.5 H1089.1 V264.7 H1087.7 V262.5 H1085.4Z" fill="#2c5e3a"/>
<circle cx="873.4" cy="307.0" r="4.9" fill="#e9ecee"/>
<path d="M870.6 306.0 H876.2 V307.2 H870.6Z M871.2 308.0 H875.6 V309.4 H871.2Z M871.8 304.1 H875.0 V305.2 H871.8Z" fill="#272d35"/>
<circle cx="879.2" cy="348.2" r="4.9" fill="#e9ecee"/>
<path d="M879.2 344.8 L882.2 349.0 H879.9 V351.2 H878.5 V349.0 H876.2Z" fill="#2c5e3a"/>
<circle cx="1076.1" cy="328.3" r="4.9" fill="#e9ecee"/>
<path d="M1076.1 324.9 L1079.1 329.1 H1076.8 V331.3 H1075.4 V329.1 H1073.1Z" fill="#2c5e3a"/>
<circle cx="1108.0" cy="389.4" r="4.9" fill="#e9ecee"/>
<path d="M1105.2 388.4 H1110.8 V389.6 H1105.2Z M1105.8 390.4 H1110.2 V391.8 H1105.8Z M1106.4 386.5 H1109.6 V387.6 H1106.4Z" fill="#272d35"/>
<circle cx="1104.8" cy="410.7" r="4.9" fill="#e9ecee"/>
<path d="M1104.8 407.3 L1107.8 411.5 H1105.5 V413.7 H1104.1 V411.5 H1101.8Z" fill="#2c5e3a"/>
<rect x="708.4" y="346.5" width="32.0" height="7.4" rx="1" fill="#3b8553" stroke="#e8ebe6" stroke-width="0.8"/>
<rect x="708.8" y="346.8" width="31.2" height="1.4" fill="#b5372f"/>
<text x="724.4" y="352.8" font-size="8" font-weight="bold" fill="#fff" text-anchor="middle">G1501</text>
<rect x="853.5" y="492.8" width="31.5" height="7.6" rx="1" fill="#3b8553" stroke="#e8ebe6" stroke-width="0.8"/>
<rect x="853.9" y="493.1" width="30.7" height="1.4" fill="#b5372f"/>
<text x="869.2" y="499.2" font-size="8" font-weight="bold" fill="#fff" text-anchor="middle">G1501</text>
<rect x="681.0" y="259.6" width="14.0" height="8.0" rx="1" fill="#3b8553" stroke="#e8ebe6" stroke-width="0.8"/>
<rect x="681.4" y="259.9" width="13.2" height="1.4" fill="#b5372f"/>
<text x="688.0" y="266.2" font-size="8" font-weight="bold" fill="#fff" text-anchor="middle">G1501</text>
<rect x="1080.3" y="560.6" width="19.2" height="7.6" rx="1" fill="#3b8553" stroke="#e8ebe6" stroke-width="0.8"/>
<rect x="1080.7" y="560.9" width="18.4" height="1.4" fill="#b5372f"/>
<text x="1089.9" y="567.0" font-size="8" font-weight="bold" fill="#fff" text-anchor="middle">G70</text>
<rect x="864.5" y="534.5" width="18.3" height="7.6" rx="1" fill="#8a9a4a" stroke="#e8ebe6" stroke-width="0.8"/>
<text x="873.6" y="540.9" font-size="8" font-weight="bold" fill="#fff" text-anchor="middle">G316</text>
<rect x="860.3" y="608.0" width="24.0" height="7.6" rx="1" fill="#c9bd62" stroke="#e8ebe6" stroke-width="0.8"/>
<text x="872.3" y="614.4" font-size="8" font-weight="bold" fill="#5a5a2a" text-anchor="middle">S203</text>
<circle cx="873.4" cy="324.3" r="4.7" fill="url(#od)"/>
<circle cx="832.1" cy="406.7" r="4.7" fill="url(#od)"/>
<circle cx="899.6" cy="404.9" r="4.7" fill="url(#od)"/>
<circle cx="1016.5" cy="306.2" r="4.7" fill="url(#od)"/>
<circle cx="1002.7" cy="349.0" r="4.7" fill="url(#od)"/>
<circle cx="968.6" cy="380.1" r="4.7" fill="url(#od)"/>
<circle cx="1001.6" cy="378.0" r="4.7" fill="url(#od)"/>
<circle cx="985.7" cy="391.3" r="4.7" fill="url(#od)"/>
<circle cx="942.0" cy="400.6" r="4.7" fill="url(#od)"/>
<circle cx="1036.5" cy="426.2" r="4.7" fill="url(#od)"/>
<circle cx="900.1" cy="484.1" r="4.7" fill="url(#od)"/>
<circle cx="1026.6" cy="474.2" r="4.7" fill="url(#od)"/>
</svg>
</div>
</div>
</body>
</html>
